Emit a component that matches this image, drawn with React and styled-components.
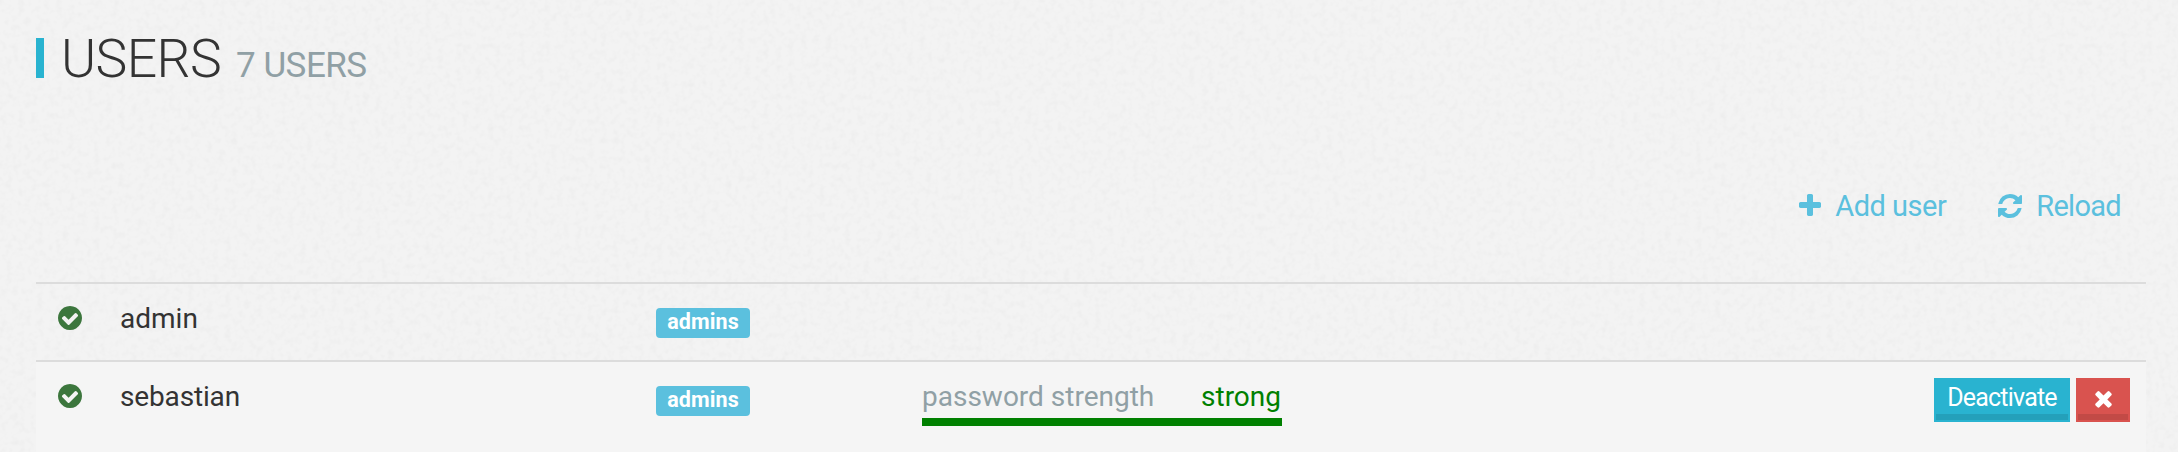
import React from "react";
import styled, { createGlobalStyle } from "styled-components";

const Global = createGlobalStyle`
  *, *::before, *::after { box-sizing: border-box; }
  html, body { margin: 0; padding: 0; background: #f2f2f2; }
  body { font-family: Roboto, "Liberation Sans", sans-serif; color: #333; }
`;

const Page = styled.main`
  position: relative;
  isolation: isolate;
  height: 452px;
  padding: 0 32px 0 36px;
  overflow: hidden;
  background: #f3f3f3;
`;

const Grain = styled.svg`
  position: absolute;
  inset: 0;
  z-index: -1;
  width: 100%;
  height: 100%;
`;

const Header = styled.header`
  display: flex;
  align-items: flex-start;
  height: 186px;
  padding-top: 38px;
`;

const Title = styled.h1`
  display: flex;
  align-items: baseline;
  height: 40px;
  margin: 0;
  padding-left: 17px;
  border-left: 8px solid #29b3d0;
  font-size: 53.5px;
  font-weight: 300;
  line-height: 41px;
  letter-spacing: -0.6px;
  white-space: nowrap;
`;

const Count = styled.small`
  margin-left: 15px;
  font-size: 35px;
  font-weight: 400;
  letter-spacing: -0.5px;
  color: #90a0a5;
`;

const Toolbar = styled.nav`
  display: flex;
  justify-content: flex-end;
  align-items: flex-start;
  gap: 50px;
  height: 96px;
  padding: 5px 25px 0 0;
`;

const Action = styled.button`
  display: flex;
  align-items: center;
  gap: ${(p) => p.$gap}px;
  height: 30px;
  padding: 0;
  border: 0;
  background: none;
  color: #5bc0de;
  font: 400 29px/30px Roboto, "Liberation Sans", sans-serif;
  letter-spacing: ${(p) => p.$tracking}px;
  white-space: nowrap;
`;

const Glyph = styled.svg`
  display: block;
  flex: none;
  width: ${(p) => p.$size}px;
  height: ${(p) => p.$size}px;
  fill: currentColor;
`;

const Table = styled.section`
  display: flex;
  flex-direction: column;
`;

const Row = styled.div`
  display: grid;
  grid-template-columns: 84px 536px 266px 1fr auto;
  align-items: start;
  height: ${(p) => p.$height}px;
  border-top: 2px solid #dcdcdc;
  background: ${(p) => (p.$hover ? "#f5f5f5" : "transparent")};
`;

const Status = styled.div`
  padding: 20px 0 0 20px;
  color: #3c763d;
`;

const Name = styled.div`
  padding-top: 19px;
  font-size: 28px;
  line-height: 32px;
  letter-spacing: ${(p) => p.$tracking}px;
`;

const Badge = styled.span`
  width: 94px;
  height: 30px;
  margin-top: 24px;
  border-radius: 4px;
  background: #5bc0de;
  color: #fff;
  font-size: 21.5px;
  font-weight: 700;
  line-height: 27px;
  letter-spacing: 0.1px;
  text-align: center;
`;

const Strength = styled.div`
  display: flex;
  justify-content: space-between;
  width: 360px;
  height: 64px;
  padding: 19px 1px 0 0;
  border-bottom: 8px solid #008000;
  font-size: 28px;
  line-height: 32px;
  letter-spacing: 0;
  color: #90a0a5;
`;

const Level = styled.span`
  color: #008000;
`;

const Buttons = styled.div`
  display: flex;
  gap: 6px;
  padding: 16px 16px 0 0;
`;

const Button = styled.button`
  display: flex;
  justify-content: center;
  align-items: center;
  width: ${(p) => p.$width}px;
  height: 44px;
  padding: 0 0 4px;
  border: 2px solid ${(p) => p.$color};
  background: ${(p) => p.$color};
  box-shadow: inset 0 -6px 0 rgba(0, 0, 0, 0.1);
  color: #fff;
  font: 400 25px/30px Roboto, "Liberation Sans", sans-serif;
  letter-spacing: -0.8px;
`;

const paths = {
  plus: "M1600 736v192q0 40-28 68t-68 28h-416v416q0 40-28 68t-68 28h-192q-40 0-68-28t-28-68v-416h-416q-40 0-68-28t-28-68v-192q0-40 28-68t68-28h416v-416q0-40 28-68t68-28h192q40 0 68 28t28 68v416h416q40 0 68 28t28 68z",
  refresh: "M1639 1056q0 5-1 7-64 268-268 434.5t-478 166.5q-146 0-282.5-55t-243.5-157l-129 129q-19 19-45 19t-45-19-19-45v-448q0-26 19-45t45-19h448q26 0 45 19t19 45-19 45l-137 137q71 66 161 102t187 36q134 0 250-65t186-179q11-17 53-117 8-23 30-23h192q13 0 22.5 9.5t9.5 22.5zm25-800v448q0 26-19 45t-45 19h-448q-26 0-45-19t-19-45 19-45l138-138q-148-137-349-137-134 0-250 65t-186 179q-11 17-53 117-8 23-30 23h-199q-13 0-22.5-9.5t-9.5-22.5v-7q65-268 270-434.5t480-166.5q146 0 284 55.5t245 156.5l130-129q19-19 45-19t45 19 19 45z",
  check: "M1412 734q0-28-18-46l-91-90q-19-19-45-19t-45 19l-408 407-226-226q-19-19-45-19t-45 19l-91 90q-18 18-18 46 0 27 18 45l362 362q19 19 45 19 27 0 46-19l543-543q18-18 18-45zm252 162q0 209-103 385.5t-279.5 279.5-385.5 103-385.5-103-279.5-279.5-103-385.5 103-385.5 279.5-279.5 385.5-103 385.5 103 279.5 279.5 103 385.5z",
  times: "M1490 1322q0 40-28 68l-136 136q-28 28-68 28t-68-28l-294-294-294 294q-28 28-68 28t-68-28l-136-136q-28-28-28-68t28-68l294-294-294-294q-28-28-28-68t28-68l136-136q28-28 68-28t68 28l294 294 294-294q28-28 68-28t68 28l136 136q28 28 28 68t-28 68l-294 294 294 294q28 28 28 68z",
};

const Icon = ({ name, size = 28 }) => (
  <Glyph $size={size} viewBox="0 0 1792 1792" aria-hidden="true">
    <path d={paths[name]} />
  </Glyph>
);

export default function App() {
  return (
    <>
      <Global />
      <Page>
        <Grain aria-hidden="true">
          <filter id="grain" x="0" y="0" width="100%" height="100%">
            <feTurbulence type="fractalNoise" baseFrequency="0.16" numOctaves="2" seed="4" stitchTiles="stitch" />
            <feColorMatrix values="0 0 0 0 0  0 0 0 0 0  0 0 0 0 0  0.05 0 0 0 -0.022" />
          </filter>
          <rect width="100%" height="100%" filter="url(#grain)" />
        </Grain>
        <Header>
          <Title>
            USERS <Count>7 USERS</Count>
          </Title>
        </Header>
        <Toolbar>
          <Action $gap={11} $tracking={-0.5}>
            <Icon name="plus" />
            Add user
          </Action>
          <Action $gap={12} $tracking={-0.7}>
            <Icon name="refresh" />
            Reload
          </Action>
        </Toolbar>
        <Table>
          <Row $height={78}>
            <Status>
              <Icon name="check" />
            </Status>
            <Name $tracking={0}>admin</Name>
            <Badge>admins</Badge>
          </Row>
          <Row $height={92} $hover>
            <Status>
              <Icon name="check" />
            </Status>
            <Name $tracking={-0.15}>sebastian</Name>
            <Badge>admins</Badge>
            <Strength>
              <span>password strength</span>
              <Level>strong</Level>
            </Strength>
            <Buttons>
              <Button $width={136} $color="#29b3d0">Deactivate</Button>
              <Button $width={54} $color="#d9534f" aria-label="Delete">
                <Icon name="times" size={25} />
              </Button>
            </Buttons>
          </Row>
        </Table>
      </Page>
    </>
  );
}
